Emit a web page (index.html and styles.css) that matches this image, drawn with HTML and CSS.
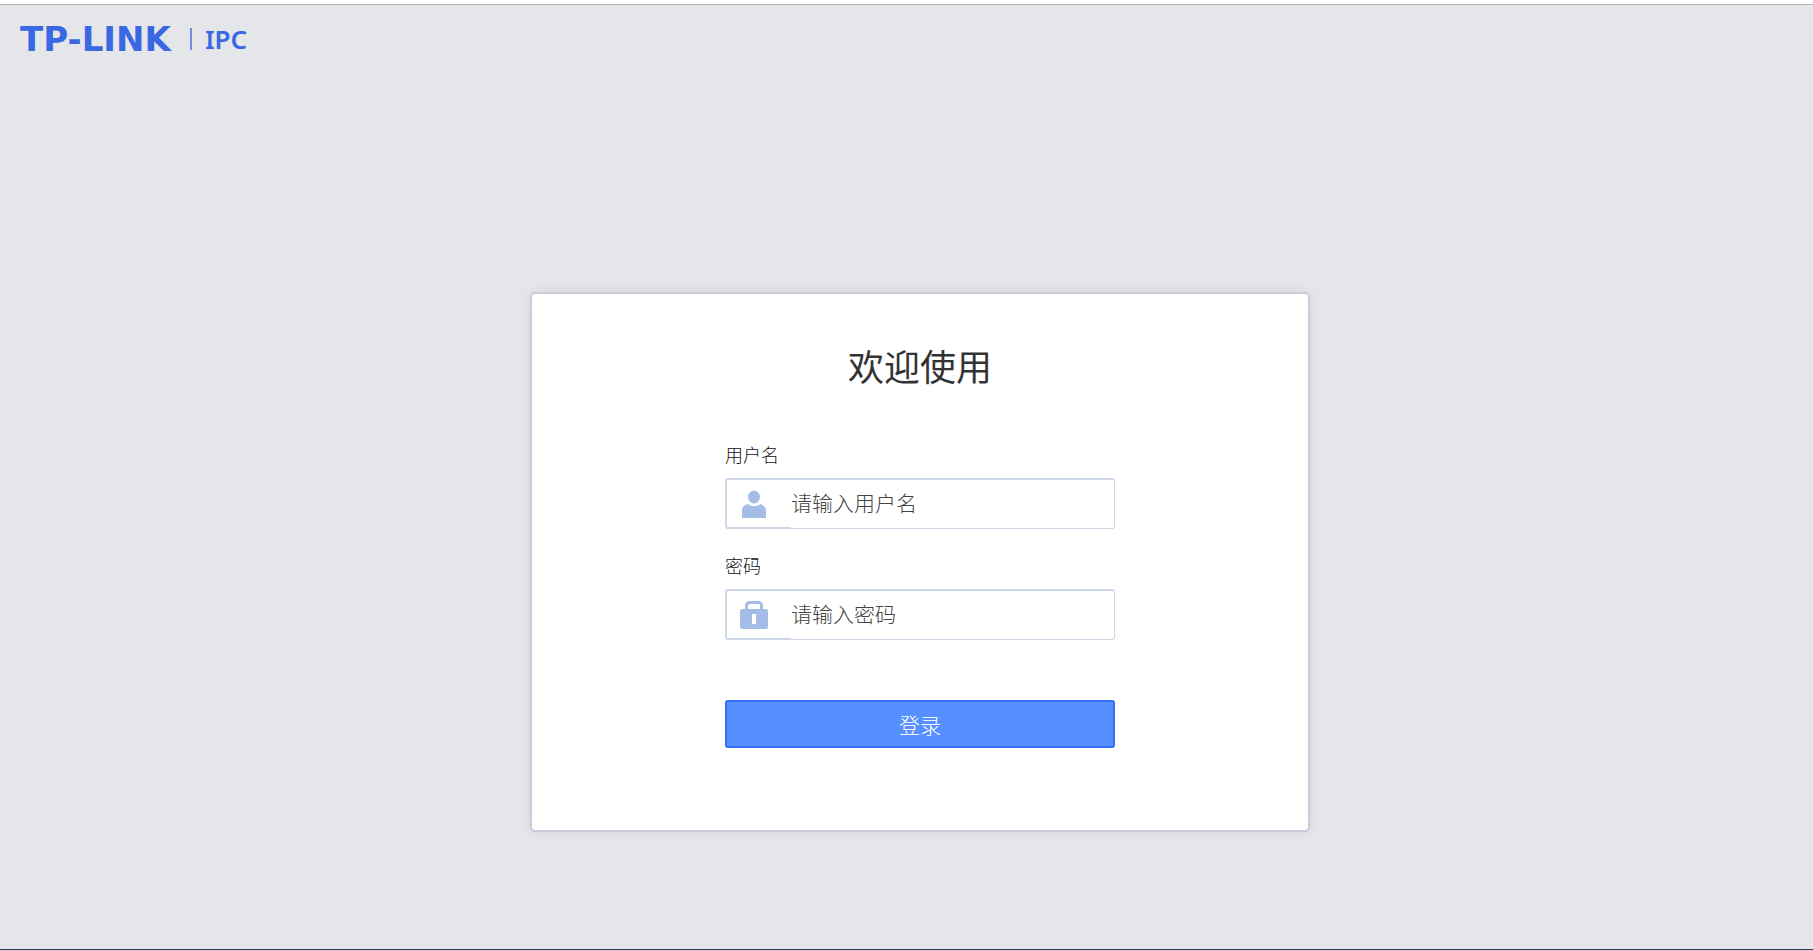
FILE: index.html
```
<!DOCTYPE html>
<html lang="zh-CN">
<head>
    <meta charset="UTF-8">
    <meta name="viewport" content="width=device-width, initial-scale=1.0">
    <title>TP-LINK IPC</title>
    <link rel="stylesheet" href="styles.css">
</head>
<body>

<header class="header">
    <span class="logo">TP-LINK</span>
    <span class="logo-line"></span>
    <span class="logo-sub">IPC</span>
</header>

<main class="main">
    <form class="login">
        <h1 class="login-title">欢迎使用</h1>

        <div class="login-body">
            <!-- 用户名 -->
            <label class="login-label" for="username">用户名</label>
            <div class="input-box">
                <span class="input-icon">
                    <svg width="28" height="28" viewBox="0 0 28 28" fill="#a4bce6">
                        <ellipse cx="14" cy="7" rx="6" ry="6.500"/>
                        <path d="M2 28v-7c0-4 2-6 6-7 2 2 4 2 6 2s4 0 6-2c4 1 6 3 6 7v7z"/>
                    </svg>
                </span>
                <input type="text" id="username" placeholder="请输入用户名">
            </div>

            <!-- 密码 -->
            <label class="login-label" for="password">密码</label>
            <div class="input-box">
                <span class="input-icon">
                    <svg width="28" height="28" viewBox="0 0 28 28">
                        <path d="M6.500 10V4.500a3 3 0 0 1 3-3h9a3 3 0 0 1 3 3V10" fill="none" stroke="#a4bce6" stroke-width="3"/>
                        <path fill="#a4bce6" fill-rule="evenodd" d="M2 8h24a2 2 0 0 1 2 2v16a2 2 0 0 1-2 2H2a2 2 0 0 1-2-2V10a2 2 0 0 1 2-2zM12 13v10h4V13z"/>
                    </svg>
                </span>
                <input type="password" id="password" placeholder="请输入密码">
            </div>

            <button type="button" class="login-btn">登录</button>
        </div>
    </form>
</main>

</body>
</html>
```

FILE: styles.css
```
* {
    box-sizing: border-box;
}
body {
    display: flex;
    flex-direction: column;
    min-height: 100vh;
    margin: 0;
    border-top: 4px solid #ffffff;
    border-bottom: 1px solid #2b3a4c;
    background-color: #e4e6ea;
    color: #333333;
    font-family: "Noto Sans CJK SC", sans-serif;
    font-weight: 300;
}
.header {
    display: flex;
    align-items: center;
    height: 68px;
    padding: 0 20px;
    border-top: 1px solid #b4b4b4;
    color: #3a67e2;
}
.logo {
    min-width: 157px;
    font-family: "DejaVu Sans", sans-serif;
    font-size: 34px;
    font-weight: bold;
    line-height: 40px;
}
.logo-line {
    width: 2px;
    height: 22px;
    margin: 0 13px;
    background: #6f8fe6;
}
.logo-sub {
    font-family: "Noto Sans", sans-serif;
    font-size: 26px;
    font-weight: 600;
    line-height: 40px;
}
.main {
    flex: 1;
    padding: 220px 0 80px 27px;
}
.login {
    max-width: 780px;
    min-height: 540px;
    margin: 0 auto;
    padding: 46px 20px 80px;
    border: 2px solid #c8ccdb;
    border-radius: 5px;
    background: #ffffff;
    box-shadow: 0 0 12px rgba(0, 0, 0, 0.08);
}
.login-title {
    margin: 0 0 51px;
    font-size: 36px;
    font-weight: 400;
    line-height: 50px;
    text-align: center;
}
.login-body {
    max-width: 390px;
    margin: 0 auto;
}
.login-label {
    display: block;
    margin-bottom: 11px;
    color: #111111;
    font-size: 18px;
    line-height: 26px;
}
.input-box {
    display: flex;
    height: 51px;
    margin-bottom: 23px;
    border: 1px solid #cdd7e5;
    border-top-width: 2px;
    border-left-width: 2px;
    border-radius: 3px;
}
.input-icon {
    display: flex;
    align-items: center;
    width: 64px;
    padding-left: 13px;
    border-bottom: 1px solid #cdd7e5;
}
.input-box input {
    flex: 1;
    min-width: 0;
    padding: 0 10px 4px 0;
    border: none;
    outline: none;
    background: none;
    color: #333333;
    font-family: inherit;
    font-size: 21px;
    font-weight: 300;
}
.input-box input::placeholder {
    color: #444444;
}
.login-btn {
    display: block;
    width: 100%;
    height: 48px;
    margin-top: 60px;
    padding: 0;
    border: 2px solid #346dfa;
    border-radius: 3px;
    background: #568fff;
    color: #ffffff;
    font-family: inherit;
    font-size: 21px;
    font-weight: 300;
    cursor: pointer;
}
.login-btn:hover {
    background: #4681fa;
}
```
